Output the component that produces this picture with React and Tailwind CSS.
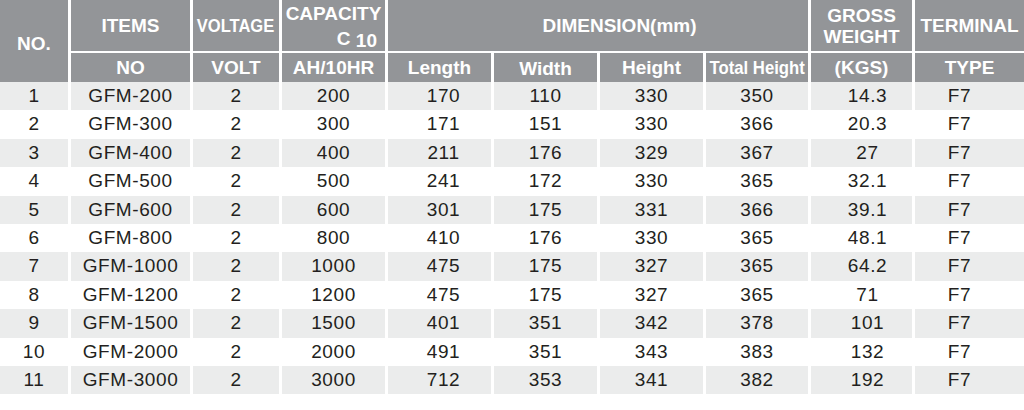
const rows = [
  ['1', 'GFM-200', '2', '200', '170', '110', '330', '350', '14.3', 'F7'],
  ['2', 'GFM-300', '2', '300', '171', '151', '330', '366', '20.3', 'F7'],
  ['3', 'GFM-400', '2', '400', '211', '176', '329', '367', '27', 'F7'],
  ['4', 'GFM-500', '2', '500', '241', '172', '330', '365', '32.1', 'F7'],
  ['5', 'GFM-600', '2', '600', '301', '175', '331', '366', '39.1', 'F7'],
  ['6', 'GFM-800', '2', '800', '410', '176', '330', '365', '48.1', 'F7'],
  ['7', 'GFM-1000', '2', '1000', '475', '175', '327', '365', '64.2', 'F7'],
  ['8', 'GFM-1200', '2', '1200', '475', '175', '327', '365', '71', 'F7'],
  ['9', 'GFM-1500', '2', '1500', '401', '351', '342', '378', '101', 'F7'],
  ['10', 'GFM-2000', '2', '2000', '491', '351', '343', '383', '132', 'F7'],
  ['11', 'GFM-3000', '2', '3000', '712', '353', '341', '382', '192', 'F7'],
];

// small per-column nudges so the numbers sit where the sheet has them
const cellPad = ['', '', '', '', 'pl-[8px]', '', '', '', 'pl-[12px]', 'pr-[20px]'];

const cols = 'grid grid-cols-[68px_119px_86px_103px_103px_103px_103px_102px_101px_109px] gap-x-[3px]';

function Head({ children, className = '' }) {
  return (
    <div className={`bg-[#939598] text-white font-bold text-[19px] flex items-center justify-center text-center ${className}`}>
      {children}
    </div>
  );
}

export default function App() {
  return (
    <div className="w-[1024px] h-[410px] bg-white overflow-hidden font-['Liberation_Sans',Arial,sans-serif]">
      {/* header */}
      <div className={`${cols} grid-rows-[51px_29px] gap-y-[2px] leading-none`}>
        <Head className="row-span-2 pt-[4px]">NO.</Head>
        <Head>ITEMS</Head>
        <Head>
          <span className="inline-block scale-x-[0.87]">VOLTAGE</span>
        </Head>
        <Head className="flex-col items-stretch">
          <span className="leading-[25px] text-center">CAPACITY</span>
          <span className="leading-[25px] text-right pr-[8px]">
            C <span className="relative top-[2px]">10</span>
          </span>
        </Head>
        <Head className="col-span-4 pl-[43px]">DIMENSION(mm)</Head>
        <Head className="flex-col leading-[21px]">
          <span>GROSS</span>
          <span>WEIGHT</span>
        </Head>
        <Head>TERMINAL</Head>

        <Head>NO</Head>
        <Head>VOLT</Head>
        <Head>AH/10HR</Head>
        <Head>Length</Head>
        <Head className="pt-[2px]">Width</Head>
        <Head>Height</Head>
        <Head>
          <span className="inline-block scale-x-[0.88] whitespace-nowrap">Total Height</span>
        </Head>
        <Head>(KGS)</Head>
        <Head>TYPE</Head>
      </div>

      {/* body */}
      {rows.map((r, i) => (
        <div key={r[0]} className={`${cols} h-[28.4px]`}>
          {r.map((v, j) => (
            <div
              key={j}
              className={`flex items-center justify-center text-[19px] tracking-[0.6px] text-[#231f20] ${cellPad[j]} ${i % 2 === 0 ? 'bg-[#ebecec]' : 'bg-white'}`}
            >
              {v}
            </div>
          ))}
        </div>
      ))}
    </div>
  );
}
